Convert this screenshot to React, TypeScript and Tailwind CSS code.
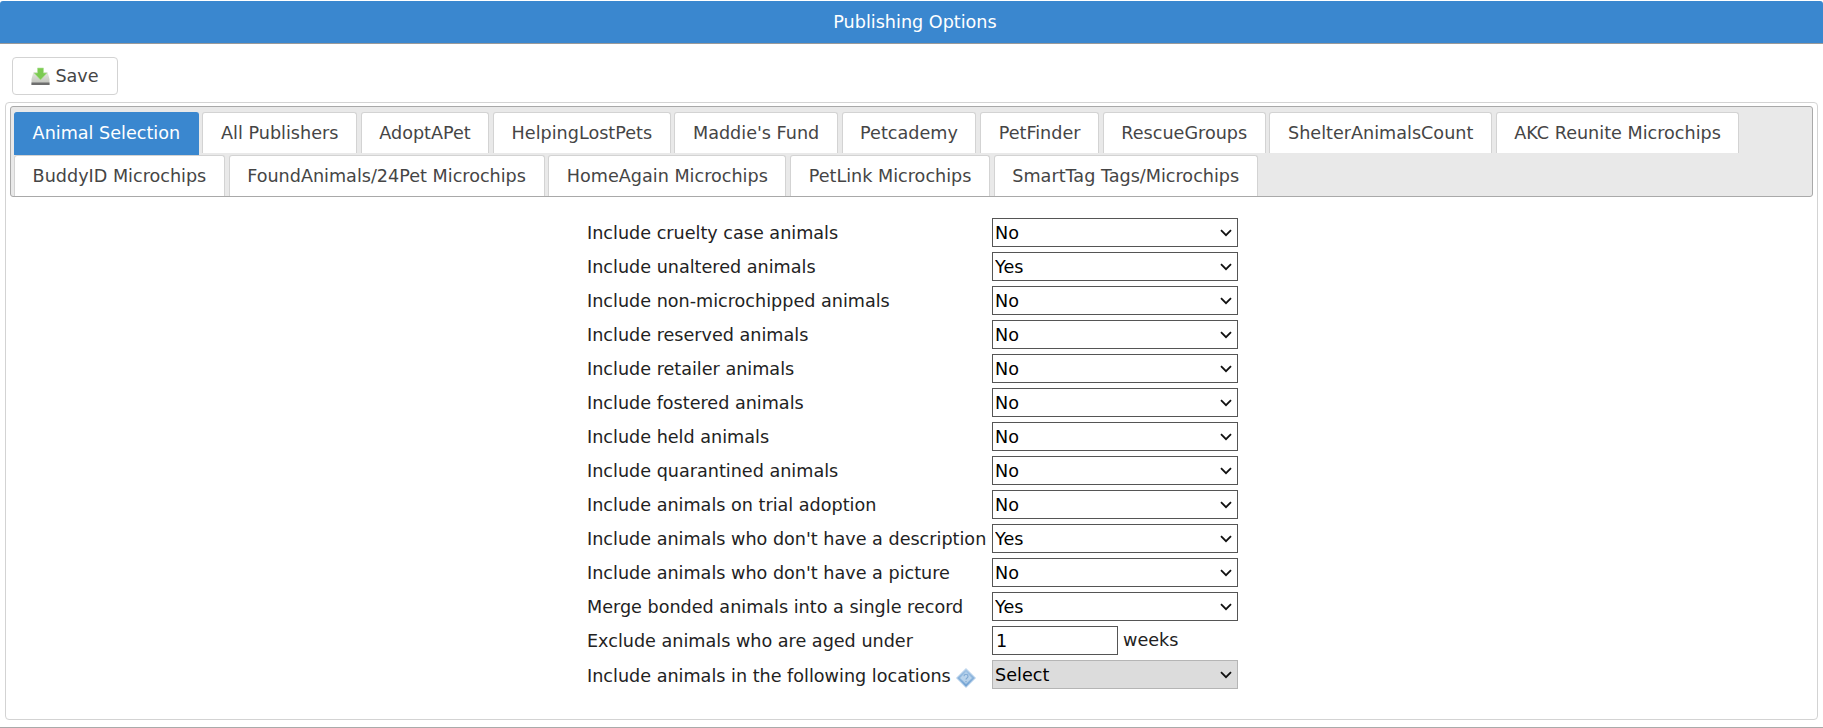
const tabsRow1 = [
  "Animal Selection",
  "All Publishers",
  "AdoptAPet",
  "HelpingLostPets",
  "Maddie's Fund",
  "Petcademy",
  "PetFinder",
  "RescueGroups",
  "ShelterAnimalsCount",
  "AKC Reunite Microchips",
];
const tabsRow2 = [
  "BuddyID Microchips",
  "FoundAnimals/24Pet Microchips",
  "HomeAgain Microchips",
  "PetLink Microchips",
  "SmartTag Tags/Microchips",
];

const rows = [
  ["Include cruelty case animals", "No"],
  ["Include unaltered animals", "Yes"],
  ["Include non-microchipped animals", "No"],
  ["Include reserved animals", "No"],
  ["Include retailer animals", "No"],
  ["Include fostered animals", "No"],
  ["Include held animals", "No"],
  ["Include quarantined animals", "No"],
  ["Include animals on trial adoption", "No"],
  ["Include animals who don't have a description", "Yes"],
  ["Include animals who don't have a picture", "No"],
  ["Merge bonded animals into a single record", "Yes"],
];

function Tab({ label, active }: { label: string; active?: boolean }) {
  return (
    <div
      className={`px-[17.6px] pt-[8px] leading-[24px] border border-b-0 rounded-t-[3px] text-[17.6px] ${
        active
          ? "h-[43px] -mb-[2px] bg-[#3a87cf] border-[#3a87cf] text-white"
          : "h-[41px] bg-white border-[#d3d3d3] text-[#454545]"
      }`}
    >
      {label}
    </div>
  );
}

function Select({ value, grey }: { value: string; grey?: boolean }) {
  return (
    <div className="relative w-[246px] h-[29px]">
      <select
        defaultValue={value}
        className={`w-full h-full pl-[2px] pt-[1px] text-[17.6px] text-black appearance-none ${
          grey ? "bg-[#dcdcdc] border border-[#b5b5b5]" : "bg-white border border-[#555]"
        }`}
      >
        <option>{value}</option>
      </select>
      {/* native arrow comes out too small, so draw it */}
      <svg
        className="absolute right-[6px] top-[11px] pointer-events-none"
        width="12"
        height="8"
        viewBox="0 0 12 8"
      >
        <path d="M1 1.2l5 5 5-5" fill="none" stroke="#111" strokeWidth="1.8" />
      </svg>
    </div>
  );
}

export default function App() {
  return (
    <div className="font-['DejaVu_Sans',sans-serif] w-[1823px] h-[728px] bg-white overflow-hidden">
      <div className="mt-[1px] h-[43px] pl-[7px] bg-[#3a87cf] border-b border-[#9a9a9a] rounded-t-[3px] flex items-center justify-center text-white text-[17.6px]">
        Publishing Options
      </div>

      <div className="px-[12px] pt-[13px] pb-[7px]">
        <button className="h-[38px] w-[106px] border border-[#d3d3d3] rounded-[4px] bg-white flex items-center justify-center gap-[5px] text-[17.6px] text-[#454545]">
          <svg width="19" height="19" viewBox="0 0 19 19">
            <defs>
              <linearGradient id="tray" x1="0" y1="0" x2="0" y2="1">
                <stop offset="0" stopColor="#e6e8e1" />
                <stop offset="1" stopColor="#bcbeb7" />
              </linearGradient>
            </defs>
            <path d="M2.5 5h14L18.5 12v6H.5v-6z" fill="url(#tray)" />
            <path d="M.5 15.5h18V18H.5z" fill="#6e6e6e" />
            <path d="M6.5 1h6v5h3.5l-6.5 7L3 6h3.5z" fill="#7ccb52" stroke="#b4e29b" strokeWidth="0.6" />
          </svg>
          Save
        </button>
      </div>

      <div className="mx-[5px] h-[618px] border border-[#d3d3d3] rounded-[4px] px-[4px] pt-[3px]">
        <div className="bg-[#e9e9e9] border border-[#a9a9a9] rounded-[3px] pl-[3px] pt-[5px] flex flex-wrap gap-x-[3.7px] gap-y-[2px] h-[91px]">
          {tabsRow1.map((t, i) => (
            <Tab key={t} label={t} active={i === 0} />
          ))}
          {tabsRow2.map((t) => (
            <Tab key={t} label={t} />
          ))}
        </div>

        <div className="flex justify-center pt-[21px] pl-[2px]">
          <div className="flex flex-col gap-[5px] text-[17.6px] text-[#222]">
            {rows.map(([label, value]) => (
              <div key={label} className="flex items-center h-[29px]">
                <div className="w-[405px] pt-[1px] whitespace-nowrap">{label}</div>
                <Select value={value} />
              </div>
            ))}
            <div className="flex items-center h-[29px]">
              <div className="w-[405px] pt-[1px]">Exclude animals who are aged under</div>
              <input
                defaultValue="1"
                className="w-[126px] h-[29px] border border-[#555] pl-[3px] text-black"
              />
              <span className="ml-[5px]">weeks</span>
            </div>
            <div className="flex items-center h-[29px]">
              <div className="w-[405px] pt-[3px] flex items-center gap-[5px] whitespace-nowrap">
                Include animals in the following locations
                <svg className="shrink-0 mt-[3px]" width="20" height="20" viewBox="0 0 20 20">
                  <defs>
                    <linearGradient id="help" x1="0" y1="0" x2="0" y2="1">
                      <stop offset="0" stopColor="#a9c9e8" />
                      <stop offset="1" stopColor="#6d9fd1" />
                    </linearGradient>
                  </defs>
                  <path d="M10 .5l9.5 9.5-9.5 9.5L.5 10z" fill="url(#help)" stroke="#c4d9ee" />
                  <path d="M10 4l6 6-6 6-6-6z" fill="#d8e7f5" opacity="0.6" />
                  <path d="M8 8.2a2 2 0 1 1 3 1.8c-.7.4-1 .8-1 1.6M10 13v1.2" fill="none" stroke="#7fa9d3" strokeWidth="1.2" />
                </svg>
              </div>
              <Select value="Select" grey />
            </div>
          </div>
        </div>
      </div>
      <div className="mt-[7px] border-t border-[#aaa]" />
    </div>
  );
}
